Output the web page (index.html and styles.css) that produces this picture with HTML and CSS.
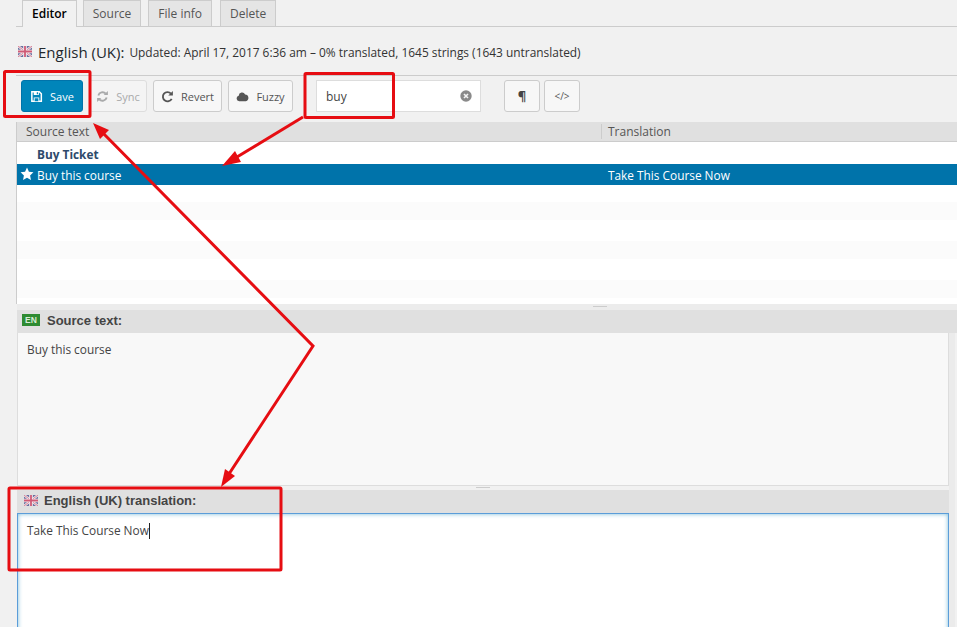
FILE: index.html
```html
<!DOCTYPE html>
<html lang="en">
<head>
<meta charset="utf-8">
<title>Editor</title>
<link rel="stylesheet" href="styles.css">
</head>
<body>
<svg width="0" height="0" class="defs"><defs>
<symbol id="flag" viewBox="0 0 14 11">
<rect width="14" height="11" fill="#6a6f9e"/>
<path d="M0 0L14 11M14 0L0 11" stroke="#f0e6ea" stroke-width="2.4"/>
<path d="M0 0L14 11M14 0L0 11" stroke="#d0657f" stroke-width=".8"/>
<path d="M7 0V11M0 5.5H14" stroke="#f3eef0" stroke-width="3.6"/>
<path d="M7 0V11M0 5.5H14" stroke="#cf5a76" stroke-width="1.8"/>
</symbol>
</defs></svg>
<div class="page">
  <nav class="tabs">
    <a class="tab active">Editor</a>
    <a class="tab">Source</a>
    <a class="tab">File info</a>
    <a class="tab">Delete</a>
  </nav>
  <h1 class="title">
    <svg class="flag"><use href="#flag"/></svg>
    <span class="lang">English (UK):</span>
    <span class="meta">Updated: April 17, 2017 6:36 am – 0% translated, 1645 strings (1643 untranslated)</span>
  </h1>
  <div class="toolbar">
    <button class="btn primary btn-save">
      <svg class="ico" viewBox="0 0 14 14"><path fill="none" stroke="currentColor" stroke-width="1.6" d="M2 1.8h8l2.2 2.2v8.200h-10.200z"/><path fill="currentColor" d="M4 1.500h5.500v4h-5.500zM4 8h6v4.500h-6z"/><path fill="#0085ba" d="M7.300 2.300h1.300v2.300h-1.300zM5 9h4v3h-4z"/></svg>
      Save</button>
    <button class="btn disabled btn-sync">
      <svg class="ico" viewBox="0 0 14 14"><path fill="none" stroke="currentColor" stroke-width="2" d="M2.500 6a4.700 4.700 0 0 1 8-2M11.500 8a4.700 4.700 0 0 1-8 2"/><path fill="currentColor" d="M12.800 1v4.500h-4.500zM1.200 13v-4.500h4.500z"/></svg>
      Sync</button>
    <button class="btn btn-revert">
      <svg class="ico" viewBox="0 0 14 14"><path fill="none" stroke="currentColor" stroke-width="2" d="M11.500 9.500a5 5 0 1 1-.8-5.700"/><path fill="currentColor" d="M12.800 1v5h-5z"/></svg>
      Revert</button>
    <button class="btn btn-fuzzy">
      <svg class="ico" viewBox="0 0 14 14"><path fill="currentColor" d="M3.500 12a3 3 0 0 1-.6-5.900 3.600 3.600 0 0 1 6.900-1.200 3.600 3.600 0 0 1 .8 7.100z"/></svg>
      Fuzzy</button>
    <label class="search">
      <span class="search-val">buy</span>
      <svg class="clear" viewBox="0 0 12 12"><circle cx="6" cy="6" r="5.700" fill="#8a8a8a"/><path d="M4 4l4 4M8 4l-4 4" stroke="#f5f5f5" stroke-width="1.600"/></svg>
    </label>
    <button class="btn btn-icon btn-para">¶</button>
    <button class="btn btn-icon btn-code">&lt;/&gt;</button>
  </div>
  <section class="grid">
    <div class="grid-head">
      <span class="col-a">Source text</span>
      <span class="col-b">Translation</span>
    </div>
    <div class="row first"><span class="col-a strong">Buy Ticket</span><span class="col-b"></span></div>
    <div class="row selected">
      <svg class="star" viewBox="0 0 24 24"><path fill="#fff" d="M12 1l3.300 7.300 7.700.9-5.700 5.300 1.500 7.800L12 18.400l-6.800 3.900 1.500-7.800L1 9.200l7.700-.9z"/></svg>
      <span class="col-a">Buy this course</span><span class="col-b">Take This Course Now</span>
    </div>
    <div class="row short"></div>
    <div class="row alt"></div>
    <div class="row"></div>
    <div class="row alt"></div>
    <div class="row"></div>
    <div class="row alt"></div>
  </section>
  <div class="panes">
    <div class="pane-col">
      <div class="split"><i></i></div>
      <div class="pane-head"><span class="en">EN</span>Source text:</div>
      <div class="source-body">Buy this course</div>
      <div class="split split-b"><i></i></div>
      <div class="pane-head target-head"><svg class="flag"><use href="#flag"/></svg>English (UK) translation:</div>
      <div class="target-body">Take This Course Now<span class="caret"></span></div>
    </div>
    <div class="gutter">
      <div class="gutter-top"></div>
      <div class="gutter-head"></div>
      <div class="gutter-strip"></div>
    </div>
  </div>
  <svg class="notes" viewBox="0 0 957 627">
    <g fill="none" stroke="#e60d12" stroke-width="3">
      <rect x="4.500" y="71.500" width="85.500" height="45" rx="1"/>
      <rect x="305" y="73.500" width="88.500" height="44" rx="1"/>
      <rect x="9" y="488" width="272" height="82" rx="1"/>
      <path d="M303 117L232 160"/>
      <path d="M100 130L313 346L227 477"/>
    </g>
    <g fill="#e60d12">
      <path d="M222 166L235 151L241 162Z"/>
      <path d="M93 123L109 130L100 139Z"/>
      <path d="M221 487L225 469L235 476Z"/>
    </g>
  </svg>
</div>
</body>
</html>
```
FILE: styles.css
```css
* { box-sizing: border-box; }
html, body { margin: 0; height: 627px; overflow: hidden; }
body { background: #f1f1f1; color: #444; font-family: "Open Sans", sans-serif; font-size: 12px; }
.defs { display: block; height: 0; }
.page { position: relative; width: 957px; height: 627px; padding-left: 16px; overflow: hidden; }

.tabs { display: flex; height: 27px; padding-left: 6px; border-bottom: 1px solid #ccc; }
.tab { display: block; height: 26px; margin-right: 7px; padding: 0 9px; background: #e5e5e5; border: 1px solid #ccc; border-bottom: 0; color: #555; font-size: 12px; font-weight: 400; line-height: 25px; }
.tab.active { height: 27px; margin-right: 6px; background: #f1f1f1; color: #000; font-weight: 600; }
.tab:nth-child(3) { margin-right: 8px; }

.title { display: flex; align-items: center; height: 48px; margin: 0; padding: 1px 0 0 2px; font-weight: 400; }
.flag { display: block; flex: none; width: 14px; height: 11px; }
.lang { margin-left: 6px; font-size: 15px; color: #23282d; font-weight: 500; }
.meta { margin-left: 5px; font-size: 11.920px; color: #333; }

.toolbar { display: flex; align-items: center; height: 47px; padding: 4px 0 10px 5px; border-top: 1px solid #ccc; }
.btn { display: flex; align-items: center; justify-content: center; height: 32px; padding: 0; border: 1px solid #ccc; border-radius: 3px; background: #f7f7f7; color: #555; font-family: "Open Sans", sans-serif; font-size: 11px; }
.ico { width: 13px; height: 13px; margin-right: 7px; flex: none; }
.primary { background: #0085ba; border-color: #0073aa; color: #fff; }
.disabled { color: #a9aaab; background: #f4f4f4; border-color: #ddd; }
.btn-save { width: 62px; }
.btn-sync { width: 58px; margin-left: 6px; }
.btn-revert { width: 69px; margin-left: 6px; }
.btn-fuzzy { width: 65px; margin-left: 6px; }
.search { display: flex; align-items: center; justify-content: space-between; width: 165px; height: 32px; margin-left: 23px; padding: 0 8px 0 9px; background: #fff; border: 1px solid #ddd; font-size: 12px; color: #444; }
.search-val { padding-top: 1px; }
.clear { width: 12px; height: 12px; }
.btn-icon { width: 36px; }
.btn-para { margin-left: 23px; font-size: 13px; font-weight: 700; color: #444; }
.btn-code { margin-left: 4px; font-size: 10px; }

.grid { border-left: 1px solid #ccc; height: 182px; background: #fff; font-size: 11.850px; }
.grid-head { display: flex; align-items: center; height: 20px; background: #e0e0e0; border-bottom: 1px solid #ccc; color: #555; font-size: 12px; }
.col-a { display: block; width: 575px; margin-left: 9px; flex: none; }
.col-b { display: block; padding-left: 6px; }
.grid-head .col-b { border-left: 1px solid #ccc; height: 15px; line-height: 15px; }
.row { position: relative; display: flex; align-items: center; height: 21px; background: #fff; }
.row.first { height: 22px; padding-top: 1px; }
.row.short { height: 17px; }
.row .col-a { margin-left: 20px; width: 571px; }
.row .col-b { padding-left: 0; }
.row.alt { height: 18px; background: #fbfbfb; }
.strong { font-weight: 700; color: #2e4a6b; }
.selected { background: #0073aa; color: #fff; }
.star { position: absolute; left: 3px; top: 3px; width: 14px; height: 14px; }

.panes { display: flex; height: 323px; }
.pane-col { width: 932px; margin-left: 1px; flex: none; }
.split { display: flex; justify-content: center; height: 6px; background: #ececec; }
.split i { display: block; width: 14px; height: 1px; margin: 2px 0 0 233px; background: #ccc; }
.split-b { height: 4px; background: #f1f1f1; }
.split-b i { margin: 1px 0 0; }
.pane-head { display: flex; align-items: center; height: 23px; padding: 0 0 3px 5px; background: #e0e0e0; color: #444; font-family: "Liberation Sans", sans-serif; font-size: 13px; font-weight: 700; }
.en { width: 18px; height: 12px; margin-right: 7px; background: #2e8b32; color: #d8ecd8; font-size: 8.500px; line-height: 12px; text-align: center; }
.source-body { height: 153px; padding: 8px 9px; background: #f8f8f8; border: 1px solid #ddd; border-top: 0; color: #444; font-size: 11.850px; }
.target-head { padding-left: 7px; }
.target-head .flag { margin-right: 6px; }
.target-body { height: 120px; padding: 8px 9px; background: #fff; border: 1px solid #5b9dd9; box-shadow: inset 0 0 4px rgba(30, 140, 190, .6); color: #444; font-size: 11.850px; }
.caret { display: inline-block; width: 1px; height: 16px; margin-bottom: -4px; background: #222; }
.gutter { flex: 1; }
.gutter-top { height: 6px; background: #ececec; }
.gutter-head { height: 23px; background: #e0e0e0; }
.gutter-strip { width: 6px; height: 100%; background: #ebebeb; }

.notes { position: absolute; left: 0; top: 0; width: 957px; height: 627px; pointer-events: none; }
```
